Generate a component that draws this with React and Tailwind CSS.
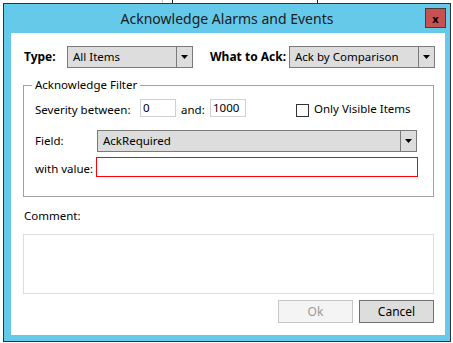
import React from 'react';

const font = { fontFamily: '"Noto Sans", "Open Sans", sans-serif' };

const Arrow = () => (
  <svg width="7" height="4" viewBox="0 0 7 4">
    <polygon points="0,0 7,0 3.5,4" fill="#000" />
  </svg>
);

// Combo box used for Type / What to Ack / Field
const Combo = ({ value, width, arrowWidth = 16 }) => (
  <div
    className="flex h-[22px] border border-[#7a7a7a] bg-[#dddddd] text-[11.5px] leading-[20px] text-black"
    style={{ width }}
  >
    <div className="flex-1 pl-[5px] truncate">{value}</div>
    <div
      className="flex items-center justify-center border-l border-[#7a7a7a]"
      style={{ width: arrowWidth }}
    >
      <Arrow />
    </div>
  </div>
);

const App = () => {
  return (
    <div className="w-[453px] h-[343px] bg-white overflow-hidden" style={font}>
      {/* background window edges behind the dialog */}
      <div className="flex h-[3px]">
        <div className="w-[162px]" />
        <div className="w-[1px] bg-[#c8c8c8]" />
        <div className="w-[9px]" />
        <div className="w-[1px] bg-[#222]" />
        <div className="w-[144px]" />
        <div className="w-[1px] bg-[#222]" />
      </div>

      {/* Dialog */}
      <div className="ml-[3px] w-[448px] h-[339px] border border-[#333] bg-[#65c9ea] flex flex-col">
        {/* Title bar */}
        <div className="relative h-[29px] flex items-center justify-center">
          <span className="text-[14px] leading-[20px] text-[#1a1a1a] mt-[1px]">
            Acknowledge Alarms and Events
          </span>
          <button className="absolute right-[4px] top-[4px] w-[21px] h-[20px] bg-[#c75050] border border-[#4a3a3a] flex items-center justify-center text-[11px] font-bold leading-none text-black">
            x
          </button>
        </div>

        {/* Content */}
        <div className="ml-[7px] mr-[5px] flex-1 mb-[6px] bg-white pl-[12px] pr-[10px] pt-[13px] text-[11.5px] leading-[16px] text-black">
          {/* Row 1 */}
          <div className="flex items-center h-[22px] text-[12px]">
            <span className="w-[44px] pl-[1px] font-bold">Type:</span>
            <Combo value="All Items" width={126} />
            <span className="ml-[17px] w-[79px] font-bold">What to Ack:</span>
            <Combo value="Ack by Comparison" width={146} />
          </div>

          {/* Acknowledge Filter group */}
          <fieldset className="mt-[9px] w-[411px] border border-[#a0a0a0] pb-[19px] px-[11px]">
            <legend className="ml-[-3px] px-[3px] leading-[16px]">Acknowledge Filter</legend>

            <div className="mt-[6px] flex items-start h-[18px]">
              <span className="w-[105px] mt-[3px]">Severity between:</span>
              <div className="w-[36px] h-[18px] border border-[#d0d0d0] pl-[2px] leading-[16px]">0</div>
              <span className="ml-[5px] w-[29px] mt-[3px]">and:</span>
              <div className="w-[36px] h-[18px] border border-[#d0d0d0] pl-[2px] leading-[16px]">1000</div>
              <div className="ml-[50px] mt-[5px] w-[13px] h-[13px] border border-[#333] bg-white" />
              <span className="ml-[5px] mt-[2px]">Only Visible Items</span>
            </div>

            <div className="mt-[13px] flex items-center h-[22px]">
              <span className="w-[62px]">Field:</span>
              <Combo value="AckRequired" width={320} />
            </div>

            <div className="mt-[5px] flex items-start h-[20px]">
              <span className="w-[61px] mt-[4px]">with value:</span>
              <div className="w-[322px] h-[20px] border border-[#ff0000] bg-white" />
            </div>
          </fieldset>

          {/* Comment */}
          <div className="mt-[11px] pl-[1px] leading-[16px]">Comment:</div>
          <div className="mt-[10px] w-[411px] h-[60px] border border-[#dcdce4]" />

          {/* Buttons */}
          <div className="mt-[6px] w-[411px] flex justify-end gap-[6px]">
            <button
              disabled
              className="w-[75px] h-[23px] border border-[#c6c6c6] bg-[#f4f4f4] text-[#9a9a9a] text-[12px]"
            >
              Ok
            </button>
            <button className="w-[75px] h-[23px] border border-[#707070] bg-[#dddddd] text-black text-[12px]">
              Cancel
            </button>
          </div>
        </div>
      </div>
    </div>
  );
};

export default App;
